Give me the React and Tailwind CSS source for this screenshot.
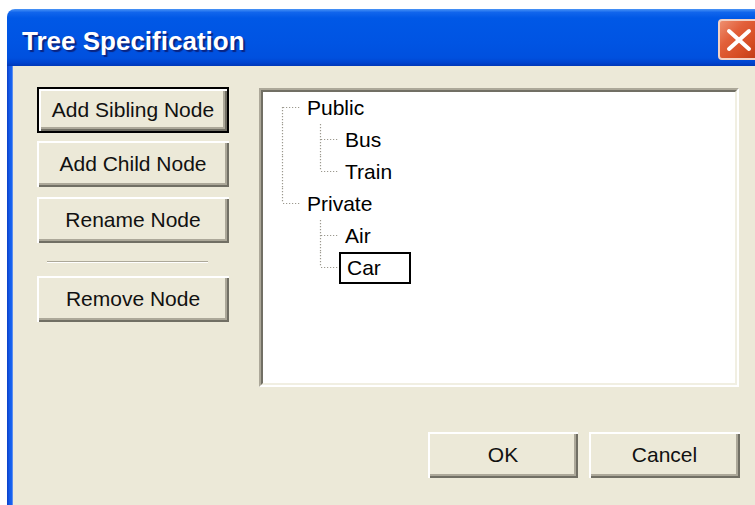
import React from 'react';

const FONT = "font-['Liberation_Sans',Arial,sans-serif]";

// classic 3D bevel used by the dialog's push buttons
const BEVEL =
  'shadow-[inset_2px_2px_0_#ffffff,inset_-2px_-2px_0_#716f64,inset_-4px_-4px_0_#aca899]';

const tree = [
  {
    label: 'Public',
    children: [{ label: 'Bus' }, { label: 'Train' }],
  },
  {
    label: 'Private',
    children: [{ label: 'Air' }, { label: 'Car', selected: true }],
  },
];

// flatten the nodes into rows, remembering which ancestor lines continue
const flatten = (nodes, guides = [], depth = 0) =>
  nodes.flatMap((node, i) => {
    const last = i === nodes.length - 1;
    const row = {
      ...node,
      guides,
      first: depth === 0 && i === 0,
      last,
    };
    return [row, ...flatten(node.children || [], [...guides, !last], depth + 1)];
  });

const DOT = { stroke: '#9c998f', strokeWidth: 1.2, strokeDasharray: '1.2 1.8' };

const Guide = ({ on }) => (
  <svg width="38" height="32" className="shrink-0">
    {on && <line x1="19.5" y1="0" x2="19.5" y2="32" {...DOT} />}
  </svg>
);

const Connector = ({ first, last }) => (
  <svg width="38" height="32" className="shrink-0">
    <line x1="19.5" y1={first ? 15 : 0} x2="19.5" y2={last ? 15 : 32} {...DOT} />
    <line x1="20" y1="15.5" x2="38" y2="15.5" {...DOT} />
  </svg>
);

const PushButton = ({ children, isDefault, className = '' }) => (
  <button
    className={`${className} h-[46px] bg-[#ece9d8] text-[21px] text-[#111] flex items-center justify-center ${
      isDefault ? 'border-2 border-black' : ''
    }`}
  >
    <span className={`w-full h-full flex items-center justify-center ${BEVEL}`}>{children}</span>
  </button>
);

const CloseButton = () => (
  <div className="mt-[10px] mr-[5px] w-[42px] h-[41px] rounded-[4px] border-2 border-[#f3d2c4] bg-[linear-gradient(135deg,#ee9070_0%,#e2603a_35%,#d64d24_70%,#c03c16_100%)] flex items-center justify-center">
    <svg width="26" height="24" viewBox="0 0 26 24">
      <line x1="3" y1="3" x2="23" y2="21" stroke="#ffffff" strokeWidth="4" strokeLinecap="round" />
      <line x1="23" y1="3" x2="3" y2="21" stroke="#ffffff" strokeWidth="4" strokeLinecap="round" />
    </svg>
  </div>
);

export default function App() {
  const rows = flatten(tree);

  return (
    <div className={`w-[755px] h-[505px] overflow-hidden bg-white pt-[9px] pl-[7px] ${FONT}`}>
      <div className="w-[758px] h-[496px] flex flex-col">
        {/* Title bar */}
        <div className="h-[57px] shrink-0 rounded-tl-[8px] flex items-start justify-between bg-[linear-gradient(180deg,#4a94f6_0%,#1165ec_6%,#0058e6_16%,#0054e3_60%,#0050de_86%,#0044cf_94%,#0038b8_100%)]">
          <span className="pl-[15px] pt-[17px] text-[26px] leading-[30px] font-bold text-white [text-shadow:2px_2px_1px_#0a2480]">
            Tree Specification
          </span>
          <CloseButton />
        </div>

        <div className="flex flex-1">
          {/* Left frame edge */}
          <div className="w-[6px] bg-[linear-gradient(90deg,#0a3fc8_0%,#1459e6_40%,#1763f0_75%,#7da2ee_100%)]" />

          {/* Client area */}
          <div className="flex-1 bg-[#ece9d8] pt-[21px] pl-[24px]">
            <div className="w-[703px] flex flex-col">
              <div className="flex gap-[30px]">
                <div className="w-[192px] flex flex-col">
                  <PushButton isDefault>Add Sibling Node</PushButton>
                  <PushButton className="mt-[8px]">Add Child Node</PushButton>
                  <PushButton className="mt-[10px]">Rename Node</PushButton>
                  <div className="mt-[18px] ml-[10px] w-[161px] h-[1px] bg-[#aca899]" />
                  <div className="ml-[10px] w-[161px] h-[1px] bg-white" />
                  <PushButton className="mt-[13px]">Remove Node</PushButton>
                </div>

                {/* Tree view */}
                <div className="mt-[1px] w-[480px] h-[299px] border-2 border-t-[#aca899] border-l-[#aca899] border-r-white border-b-white">
                  <div className="w-full h-full bg-white border-2 border-t-[#716f64] border-l-[#716f64] border-r-[#f1efe2] border-b-[#f1efe2]">
                    {rows.map((row) => (
                      <div key={row.label} className="flex h-[32px] items-center">
                        {row.guides.map((on, i) => (
                          <Guide key={i} on={on} />
                        ))}
                        <Connector first={row.first} last={row.last} />
                        <span
                          className={`h-[32px] px-[6px] flex items-center text-[21px] text-black ${
                            row.selected ? 'w-[72px] border-2 border-black px-[4px]' : ''
                          }`}
                        >
                          {row.label}
                        </span>
                      </div>
                    ))}
                  </div>
                </div>
              </div>

              <div className="mt-[45px] flex justify-end gap-[11px]">
                <PushButton className="w-[150px] h-[45px]">OK</PushButton>
                <PushButton className="w-[151px] h-[45px]">Cancel</PushButton>
              </div>
            </div>
          </div>
        </div>
      </div>
    </div>
  );
}
